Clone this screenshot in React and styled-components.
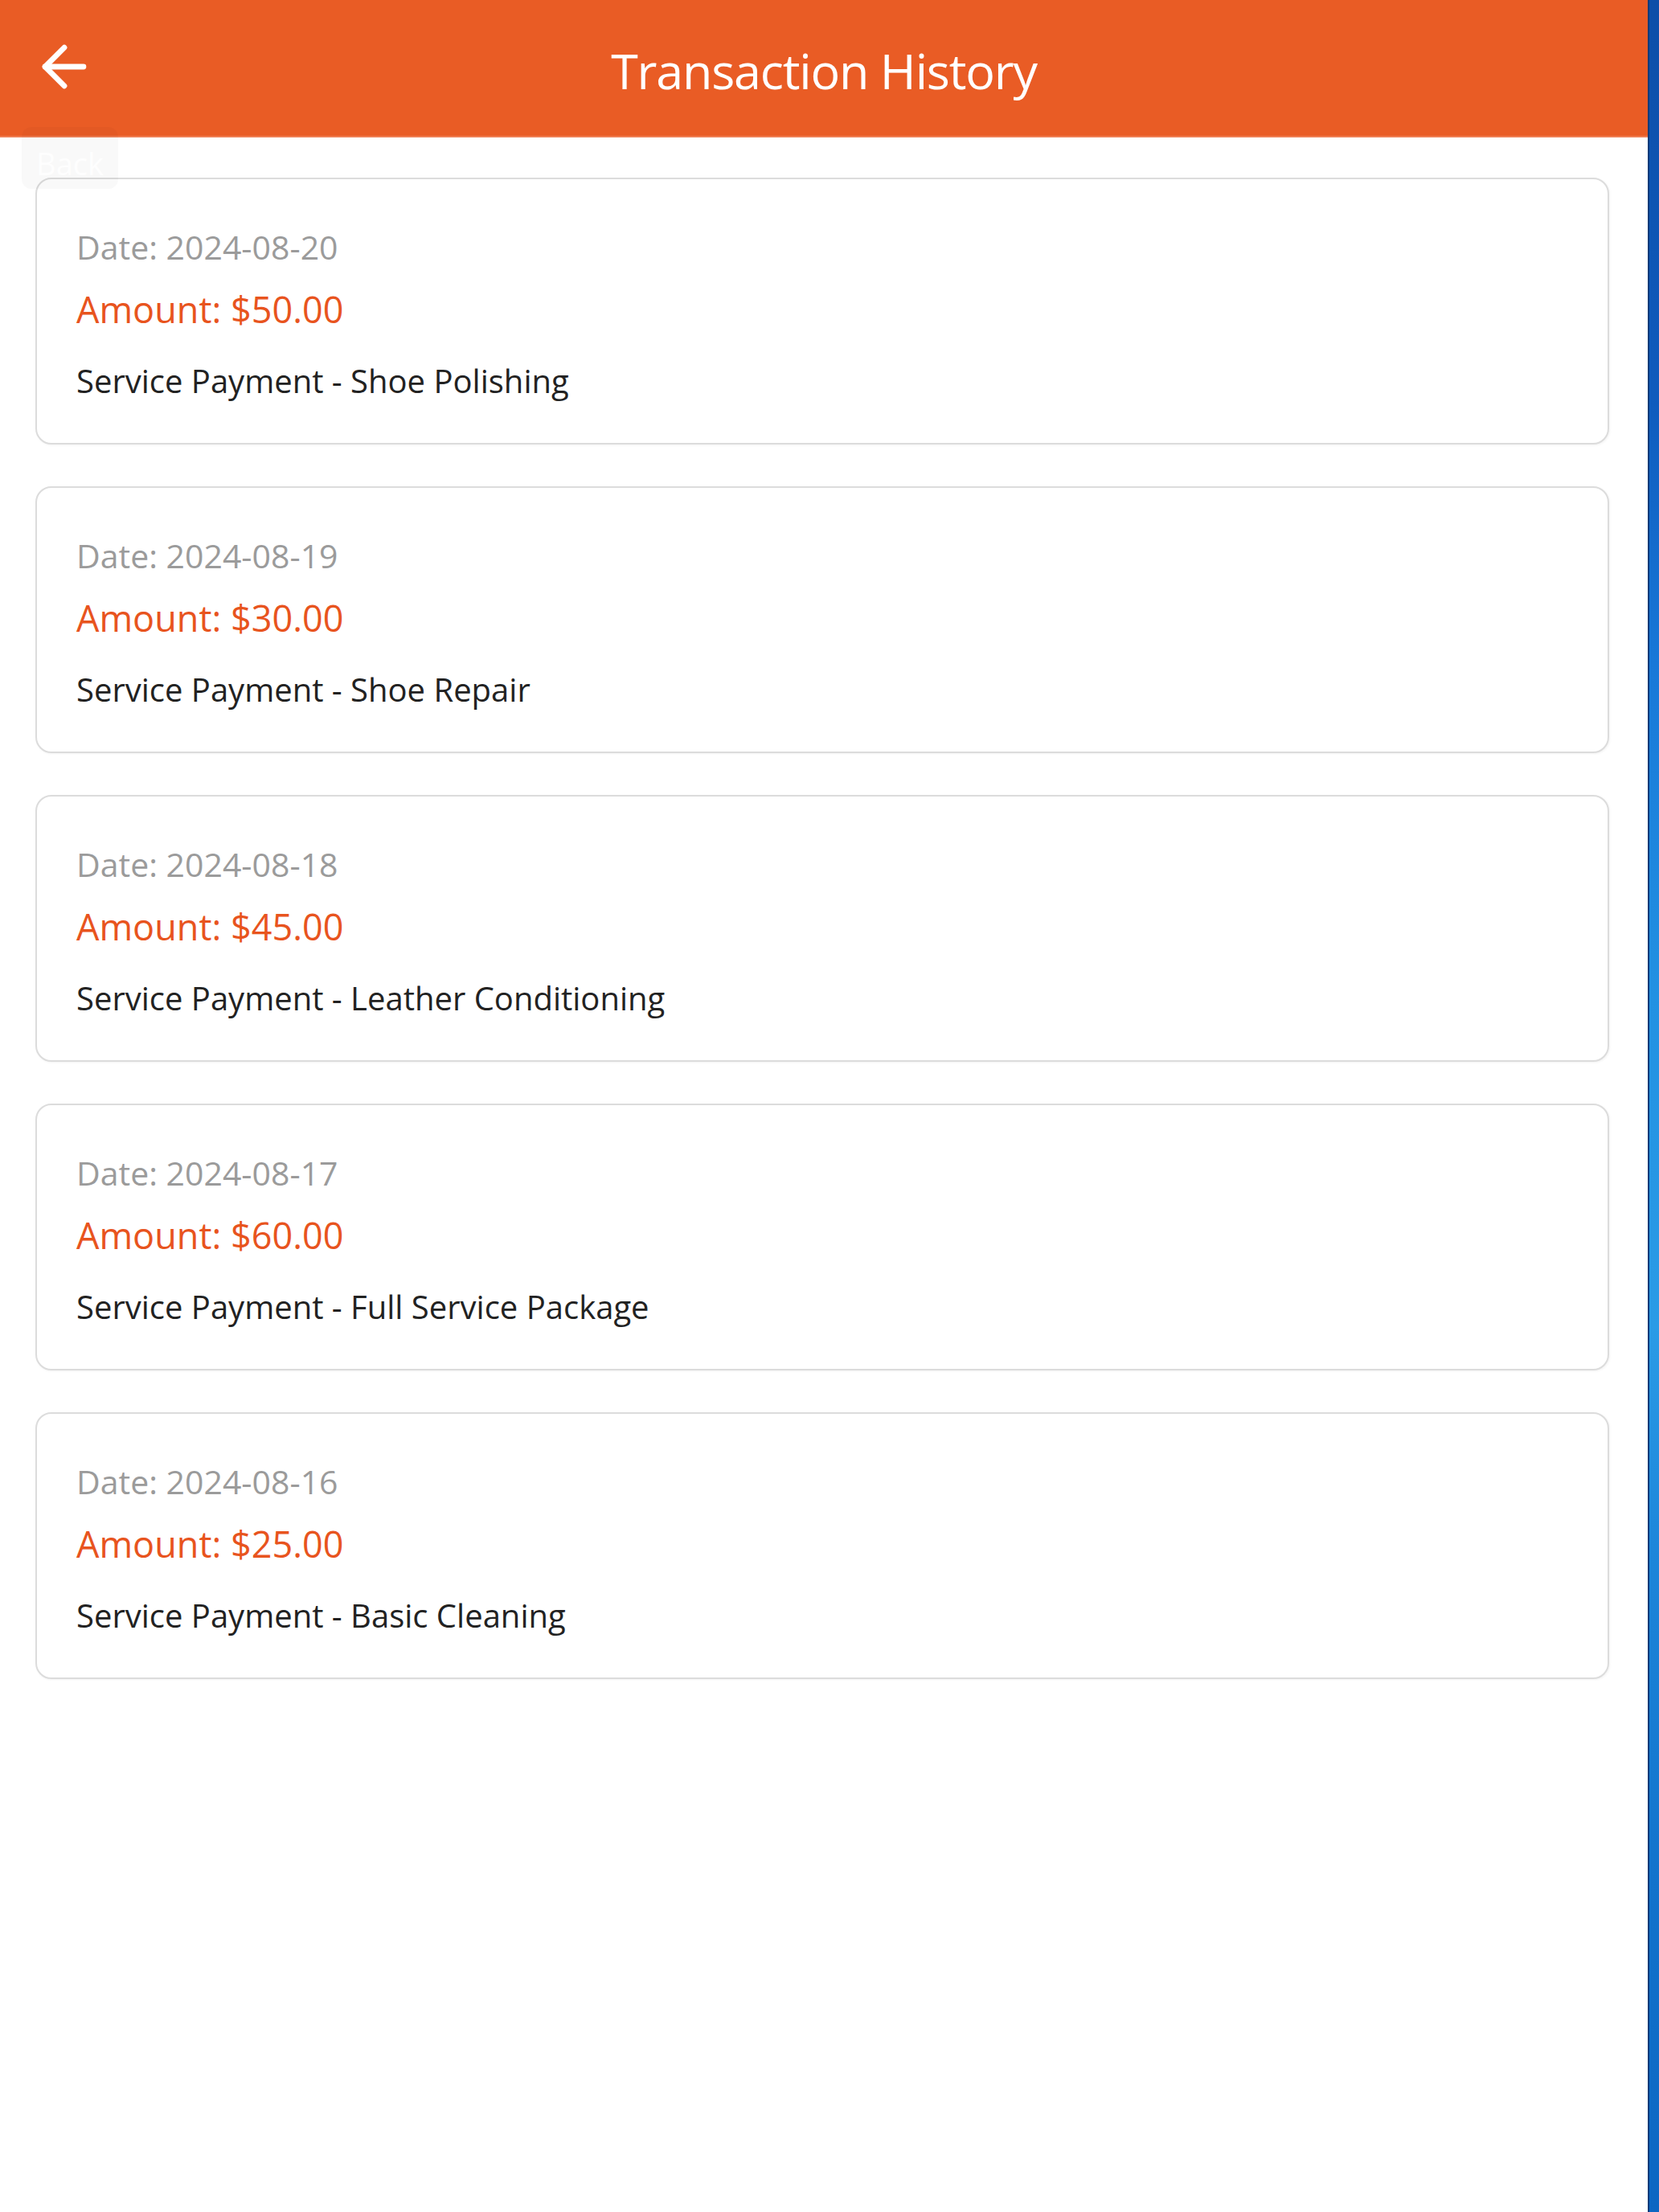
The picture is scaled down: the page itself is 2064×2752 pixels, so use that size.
import React from "react";
import styled, { createGlobalStyle } from "styled-components";
import { ArrowLeft } from "lucide-react";

const transactions = [
  { date: "2024-08-20", amount: "$50.00", service: "Shoe Polishing" },
  { date: "2024-08-19", amount: "$30.00", service: "Shoe Repair" },
  { date: "2024-08-18", amount: "$45.00", service: "Leather Conditioning" },
  { date: "2024-08-17", amount: "$60.00", service: "Full Service Package" },
  { date: "2024-08-16", amount: "$25.00", service: "Basic Cleaning" },
];

export default function App() {
  return (
    <>
      <GlobalStyle />
      <Screen>
        <Phone>
          <Header>
            <BackIcon aria-label="Go back">
              <ArrowLeft size={82} strokeWidth={2} />
            </BackIcon>
            <Title>Transaction History</Title>
            <span />
          </Header>
          <GhostButton>Back</GhostButton>
          <List>
            {transactions.map((t) => (
              <Card key={t.date}>
                <DateText>Date: {t.date}</DateText>
                <Amount>Amount: {t.amount}</Amount>
                <Service>Service Payment - {t.service}</Service>
              </Card>
            ))}
          </List>
        </Phone>
        <Desktop />
      </Screen>
    </>
  );
}

const GlobalStyle = createGlobalStyle`
  html, body {
    margin: 0;
    padding: 0;
    background: #fff;
  }
  body {
    font-family: "Open Sans", "Noto Sans", sans-serif;
  }
  * {
    box-sizing: border-box;
  }
`;

const Screen = styled.div`
  display: flex;
  width: 2064px;
  height: 2752px;
  overflow: hidden;
`;

const Phone = styled.div`
  position: relative;
  width: 2050px;
  flex-shrink: 0;
  background: #fff;
  display: flex;
  flex-direction: column;
`;

const Header = styled.header`
  height: 171px;
  background: #e95c25;
  border-bottom: 2px solid #ef7d52;
  display: grid;
  grid-template-columns: 1fr auto 1fr;
  align-items: center;
  color: #fff;
`;

const BackIcon = styled.div`
  display: flex;
  align-items: center;
  padding-left: 39px;
  padding-bottom: 4px;
  color: #fff;
`;

const Title = styled.h1`
  margin: 0;
  padding-top: 6px;
  font-size: 61px;
  font-weight: 400;
  letter-spacing: -1.2px;
  line-height: 1.362;
  color: #fff;
`;

const GhostButton = styled.div`
  position: absolute;
  left: 27px;
  top: 158px;
  width: 120px;
  height: 77px;
  border-radius: 12px;
  background: rgba(0, 0, 0, 0.022);
  color: rgba(255, 255, 255, 0.85);
  font-size: 38px;
  display: flex;
  align-items: center;
  justify-content: center;
  padding-top: 12px;
  z-index: 2;
`;

const List = styled.div`
  display: flex;
  flex-direction: column;
  gap: 52px;
  padding: 50px 48px 0 44px;
`;

const Card = styled.div`
  display: flex;
  flex-direction: column;
  height: 332px;
  padding: 56px 47px 49px 49px;
  border: 2px solid #dcdcdc;
  border-radius: 20px;
  background: #fff;
  box-shadow: 1px 1px 3px rgba(0, 0, 0, 0.05);
`;

const DateText = styled.p`
  margin: 0;
  font-size: 41px;
  line-height: 56px;
  color: #9b9b9b;
`;

const Amount = styled.p`
  margin: 20px 0 0;
  font-size: 45px;
  line-height: 60px;
  color: #e8541e;
`;

const Service = styled.p`
  margin: 31px 0 0;
  font-size: 40px;
  line-height: 56px;
  color: #222;
`;

const Desktop = styled.div`
  flex: 1;
  border-left: 2px solid #0a3b7a;
  background: linear-gradient(
    180deg,
    #0d4ea8 0%,
    #0f5bbd 18%,
    #1878d8 30%,
    #2291e2 45%,
    #2a9be6 60%,
    #1d86da 70%,
    #1273cc 85%,
    #0c66c2 100%
  );
`;
